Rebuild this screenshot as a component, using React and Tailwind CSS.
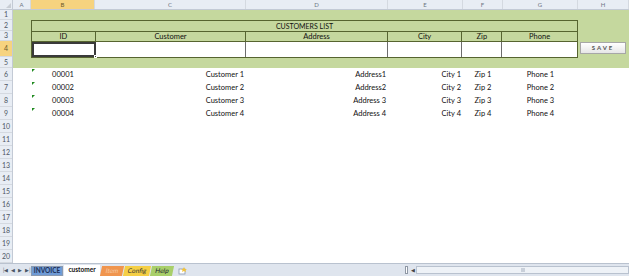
import React from "react";

const cols = [
  { key: "A", w: "w-[18px]" },
  { key: "B", w: "w-[64px]" },
  { key: "C", w: "w-[151px]" },
  { key: "D", w: "w-[142px]" },
  { key: "E", w: "w-[75px]" },
  { key: "F", w: "w-[40px]" },
  { key: "G", w: "w-[75px]" },
  { key: "H", w: "flex-1" },
];

const rowHeights = [
  "h-[10px]", "h-[11px]", "h-[10px]", "h-[16px]", "h-[11px]",
  "h-[13px]", "h-[13px]", "h-[13px]", "h-[13px]", "h-[13px]",
  "h-[13px]", "h-[13px]", "h-[13px]", "h-[13px]", "h-[13px]",
  "h-[13px]", "h-[13px]", "h-[13px]", "h-[13px]", "h-[13px]",
];

const customers = [
  { id: "00001", name: "Customer 1", address: "Address1", city: "City 1", zip: "Zip 1", phone: "Phone 1" },
  { id: "00002", name: "Customer 2", address: "Address2", city: "City 2", zip: "Zip 2", phone: "Phone 2" },
  { id: "00003", name: "Customer 3", address: "Address 3", city: "City 3", zip: "Zip 3", phone: "Phone 3" },
  { id: "00004", name: "Customer 4", address: "Address 4", city: "City 4", zip: "Zip 4", phone: "Phone 4" },
];

const headers = [
  { label: "ID", w: "w-[64px]" },
  { label: "Customer", w: "w-[151px]" },
  { label: "Address", w: "w-[142px]" },
  { label: "City", w: "w-[75px]" },
  { label: "Zip", w: "w-[40px]" },
  { label: "Phone", w: "w-[75px]" },
];

function ColumnHeader() {
  return (
    <div className="flex shrink-0 h-[10px] bg-[#e8edf4] border-b border-[#c3cad5]">
      <div className="w-[13px] shrink-0 border-r border-[#c3cad5] relative">
        <div className="absolute right-[1px] bottom-[1px] w-0 h-0 border-l-[5px] border-l-transparent border-b-[5px] border-b-[#c8cdd4]" />
      </div>
      {cols.map((c) => (
        <div
          key={c.key}
          className={`${c.w} shrink-0 flex items-center justify-center text-[6px] leading-none border-r border-[#d4d9e0] ${
            c.key === "B" ? "bg-[#f6d37f] text-[#6b5a2a]" : "text-[#6d7683]"
          }`}
        >
          {c.key}
        </div>
      ))}
    </div>
  );
}

function RowHeaders() {
  return (
    <div className="w-[13px] shrink-0 flex flex-col bg-[#e8edf4] border-r border-[#c3cad5]">
      {rowHeights.map((h, i) => (
        <div
          key={i}
          className={`${h} shrink-0 flex items-center justify-center text-[7px] leading-none border-b border-[#d4d9e0] ${
            i === 3 ? "bg-[#f6d37f] text-[#6b5a2a]" : "text-[#4f5866]"
          }`}
        >
          {i + 1}
        </div>
      ))}
    </div>
  );
}

function GreenBlock() {
  return (
    <div className="h-[58px] shrink-0 bg-[#c5d89e] pl-[18px] pt-[10px] flex items-start">
      <div className="w-[547px] border border-[#56642f]">
        <div className="h-[11px] flex items-center justify-center text-[7px] leading-none text-[#111] border-b border-[#56642f]">
          CUSTOMERS LIST
        </div>
        <div className="flex h-[10px] border-b border-[#56642f]">
          {headers.map((h, i) => (
            <div
              key={h.label}
              className={`${h.w} flex items-center justify-center text-[7.5px] leading-none text-[#111] ${
                i < headers.length - 1 ? "border-r border-[#56642f]" : ""
              }`}
            >
              {h.label}
            </div>
          ))}
        </div>
        <div className="flex h-[15px] bg-white">
          {headers.map((h, i) => (
            <div
              key={h.label}
              className={`${h.w} relative ${
                i === 0
                  ? "border-2 border-[#3a3a3a]"
                  : i < headers.length - 1
                  ? "border-r border-[#6d6d6d]"
                  : ""
              }`}
            >
              {i === 0 && (
                <div className="absolute right-[-3px] bottom-[-3px] w-[3px] h-[3px] bg-[#3a3a3a] border border-white" />
              )}
            </div>
          ))}
        </div>
      </div>
      <div className="ml-[2px] mt-[22px] w-[46px] h-[12px] border border-[#a7a7a7] bg-gradient-to-b from-white to-[#e6e6e6] flex items-center justify-center text-[6px] font-bold tracking-[2px] text-[#555] leading-none">
        SAVE
      </div>
    </div>
  );
}

function DataRows() {
  return (
    <div className="flex flex-col text-[7.5px] leading-none text-[#111]">
      {customers.map((c) => (
        <div key={c.id} className="flex shrink-0 h-[13px] items-center">
          <div className="w-[18px]" />
          <div className="w-[64px] h-full relative flex items-center justify-center">
            <div className="absolute left-[1px] top-[1px] w-0 h-0 border-r-[3px] border-r-transparent border-t-[3px] border-t-[#1f8a1f]" />
            {c.id}
          </div>
          <div className="w-[151px] text-right pr-[2px]">{c.name}</div>
          <div className="w-[142px] text-right pr-[2px]">{c.address}</div>
          <div className="w-[75px] text-right pr-[2px]">{c.city}</div>
          <div className="w-[40px] text-center">{c.zip}</div>
          <div className="w-[75px] text-center">{c.phone}</div>
          <div className="flex-1" />
        </div>
      ))}
    </div>
  );
}

function SheetTabs() {
  return (
    <div className="h-[13px] shrink-0 flex items-center bg-[#dfe5ee] border-t border-[#b9c2cf] text-[6.5px] leading-none">
      <div className="w-[31px] flex items-center gap-[3px] pl-[3px] text-[#4a5565] text-[5px]">
        <span>|◀</span>
        <span>◀</span>
        <span>▶</span>
        <span>▶|</span>
      </div>
      <div className="flex items-end h-full gap-[1px]">
        <div className="h-[10px] w-[32px] bg-[#6f9bd6] text-[#1d2f55] font-bold flex items-center justify-center border border-[#8a9ab0]">INVOICE</div>
        <div className="h-[11px] w-[36px] bg-white text-[#111] font-bold flex items-center justify-center">customer</div>
        <div className="h-[10px] w-[22px] bg-[#f0954e] text-[#f7c9a4] flex items-center justify-center -skew-x-12">Item</div>
        <div className="h-[10px] w-[26px] bg-[#f5cf45] text-[#333] flex items-center justify-center -skew-x-12">Config</div>
        <div className="h-[10px] w-[22px] bg-[#a8cf6a] text-[#223] flex items-center justify-center -skew-x-12">Help</div>
        <div className="h-[10px] px-[3px] flex items-center ml-[1px]">
          <svg width="9" height="8" viewBox="0 0 9 8">
            <rect x="1" y="2" width="6" height="5" fill="#fff" stroke="#8a9ab0" strokeWidth="0.8" />
            <path d="M6 0 L7 2 L9 2 L7.5 3 L8 5 L6 4 L4 5 L4.5 3 L3 2 L5 2 Z" fill="#f3c33a" />
          </svg>
        </div>
      </div>
      <div className="flex-1" />
      <div className="w-[224px] h-[9px] flex items-center">
        <div className="w-[3px] h-[8px] border border-[#8f98a5] bg-white mr-[2px]" />
        <div className="w-[6px] h-[8px] flex items-center justify-center text-[5px] text-[#444]">◀</div>
        <div className="flex-1 h-[8px] border border-[#b9c2cf] bg-[#eef2f7] flex items-center justify-center">
          <div className="w-[4px] h-[4px] bg-[#c9d0da]" />
        </div>
      </div>
    </div>
  );
}

export default function App() {
  return (
    <div className="w-[629px] h-[276px] flex flex-col bg-white overflow-hidden" style={{ fontFamily: "Lato, 'Liberation Sans', sans-serif" }}>
      <ColumnHeader />
      <div className="flex flex-1 min-h-0 overflow-hidden">
        <RowHeaders />
        <div className="flex-1 flex flex-col">
          <GreenBlock />
          <DataRows />
        </div>
      </div>
      <SheetTabs />
    </div>
  );
}
